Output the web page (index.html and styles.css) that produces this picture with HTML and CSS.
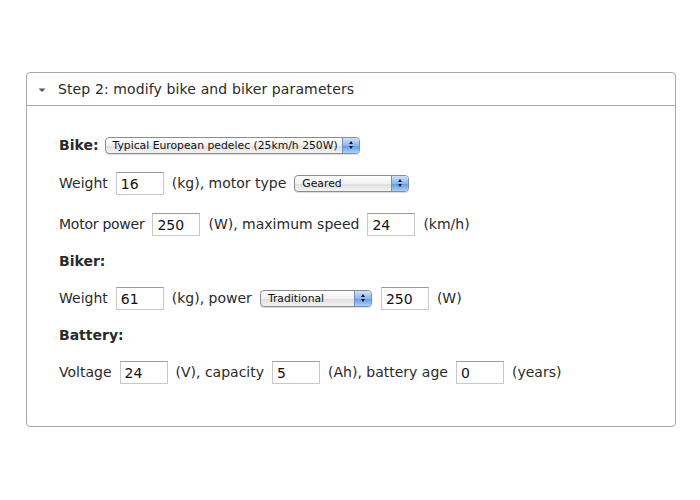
FILE: index.html
```html
<!DOCTYPE html>
<html>
<head>
<meta charset="utf-8">
<link rel="stylesheet" href="styles.css">
</head>
<body>
<div class="panel">
  <div class="panel-head">
    <svg class="caret" width="8" height="6" viewBox="0 0 8 6"><path d="M0.5 1.5 L7.5 1.5 L4 5 Z" fill="#555"/></svg>
    <span class="title">Step 2: modify bike and biker parameters</span>
  </div>
  <div class="panel-body">
    <div class="row r-bike">
      <b class="label">Bike:</b>
      <span class="sel sel-bike"><span class="sel-text">Typical European pedelec (25km/h 250W)</span><span class="step"><i class="up"></i><i class="down"></i></span></span>
    </div>
    <div class="row r-weight">
      <span>Weight</span><span class="inp">16</span><span>(kg), motor type</span>
      <span class="sel sel-geared"><span class="sel-text">Geared</span><span class="step"><i class="up"></i><i class="down"></i></span></span>
    </div>
    <div class="row r-motor">
      <span class="tight">Motor power</span><span class="inp">250</span><span>(W), maximum speed</span><span class="inp">24</span><span>(km/h)</span>
    </div>
    <div class="row r-head"><b class="label">Biker:</b></div>
    <div class="row">
      <span>Weight</span><span class="inp">61</span><span>(kg), power</span>
      <span class="sel sel-trad"><span class="sel-text">Traditional</span><span class="step"><i class="up"></i><i class="down"></i></span></span>
      <span class="inp">250</span><span>(W)</span>
    </div>
    <div class="row r-head"><b class="label">Battery:</b></div>
    <div class="row">
      <span>Voltage</span><span class="inp">24</span><span>(V), capacity</span><span class="inp">5</span><span>(Ah), battery age</span><span class="inp">0</span><span>(years)</span>
    </div>
  </div>
</div>
</body>
</html>
```

FILE: styles.css
```css
html, body {
  margin: 0;
  padding: 0;
  background: #fff;
}
body {
  padding: 72px 24px 0 26px;
  font-family: "DejaVu Sans", Verdana, sans-serif;
  font-size: 14px;
  color: #2a2a2a;
}
.panel {
  width: 648px;
  height: 353px;
  border: 1px solid #a9a9a9;
  border-radius: 4px;
  display: flex;
  flex-direction: column;
}
.panel-head {
  height: 32px;
  border-bottom: 1px solid #a9a9a9;
  display: flex;
  align-items: center;
  padding-left: 11px;
}
.caret {
  margin-right: 12px;
  margin-top: 1px;
}
.title {
  color: #2a2a2a;
  letter-spacing: 0.12px;
}
.panel-body {
  display: flex;
  flex-direction: column;
  padding: 27px 0 0 32px;
}
.row {
  height: 24px;
  display: flex;
  align-items: center;
  gap: 8px;
  margin-bottom: 13px;
}
.r-bike { margin-bottom: 14px; gap: 6px; }
.r-weight { margin-bottom: 17px; }
.r-head { margin-bottom: 13px; }
.tight { letter-spacing: -0.25px; }
.label {
  font-weight: bold;
}
.inp {
  box-sizing: border-box;
  width: 48px;
  height: 23px;
  border: 1px solid #c8c8c8;
  border-top-color: #9a9a9a;
  padding: 2px 0 0 4px;
  line-height: 18px;
  color: #111;
}
.sel {
  box-sizing: border-box;
  height: 17px;
  display: inline-flex;
  align-items: stretch;
  border: 1px solid #8c8c8c;
  border-radius: 4px;
  background: linear-gradient(#ffffff, #f1f1f1 50%, #dcdcdc 51%, #f3f3f3);
  font-family: "DejaVu Sans", sans-serif;
  font-size: 10.8px;
  color: #111;
  overflow: hidden;
  box-shadow: 0 1px 1px rgba(0,0,0,0.15);
}
.sel-text {
  flex: 1;
  padding-left: 7px;
  line-height: 15px;
  white-space: nowrap;
}
.step {
  width: 16px;
  background: linear-gradient(#cfe3fb, #8bb7ef 50%, #5e98e8 51%, #a9d0fb);
  border-left: 1px solid #6f8fc0;
  display: flex;
  flex-direction: column;
  align-items: center;
  justify-content: center;
  gap: 2px;
}
.step i {
  width: 0;
  height: 0;
  border-left: 2.5px solid transparent;
  border-right: 2.5px solid transparent;
}
.step .up { border-bottom: 3px solid #111; }
.step .down { border-top: 3px solid #111; }
.sel-bike { width: 255px; }
.sel-geared { width: 115px; }
.sel-trad { width: 112px; margin-right: 1px; }
```
